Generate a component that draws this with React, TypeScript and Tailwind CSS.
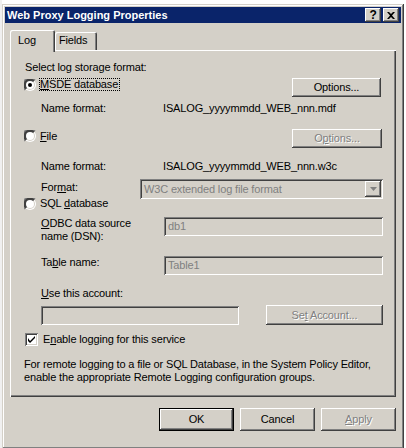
import React from 'react';

const font = "font-['Liberation_Sans',Arial,sans-serif] text-[11px] leading-[13px] tracking-[-0.15px] text-black";
const raised =
  'bg-[#d4d0c8] shadow-[inset_-1px_-1px_0_#404040,inset_1px_1px_0_#ffffff,inset_-2px_-2px_0_#808080,inset_2px_2px_0_#d4d0c8]';
const sunken =
  'bg-[#d4d0c8] shadow-[inset_1px_1px_0_#808080,inset_-1px_-1px_0_#ffffff,inset_2px_2px_0_#404040,inset_-2px_-2px_0_#d4d0c8]';
const grey = 'text-[#808080] [text-shadow:1px_1px_0_#ffffff]';

const Radio: React.FC<{ checked?: boolean }> = ({ checked }) => (
  <svg width="12" height="12" viewBox="0 0 12 12" className="shrink-0">
    <circle cx="6" cy="6" r="6" fill="#ffffff" />
    <path d="M0.5 11.5 A6 6 0 0 1 11.5 0.5 Z" fill="#808080" />
    <circle cx="6" cy="6" r="5" fill="#d4d0c8" />
    <path d="M1.5 10.5 A5 5 0 0 1 10.5 1.5 Z" fill="#404040" />
    <circle cx="6" cy="6" r="4" fill="#ffffff" />
    {checked && <circle cx="6" cy="6" r="2" fill="#000000" />}
  </svg>
);

const Checkbox: React.FC = () => (
  <div className="w-[13px] h-[13px] shrink-0 bg-white shadow-[inset_1px_1px_0_#808080,inset_-1px_-1px_0_#ffffff,inset_2px_2px_0_#404040,inset_-2px_-2px_0_#d4d0c8] flex items-center justify-center">
    <svg width="7" height="7" viewBox="0 0 7 7">
      <path d="M0 2 L0 5 L2 7 L7 2 L7 0 L2 5 Z" fill="#000000" />
    </svg>
  </div>
);

const Button: React.FC<{ w: string; h: string; disabled?: boolean; def?: boolean; children: React.ReactNode }> = ({
  w,
  h,
  disabled,
  def,
  children,
}) => (
  <div
    className={`${w} ${h} ${raised} ${def ? 'border border-black' : ''} flex items-center justify-center ${
      disabled ? grey : ''
    }`}
  >
    <span>{children}</span>
  </div>
);

const App: React.FC = () => {
  return (
    <div className={`w-[406px] h-[448px] overflow-hidden flex bg-white ${font}`}>
      <div className="w-[2px] h-full bg-[#f0f0f0]" />
      <div className="w-[402px] h-[445px] mt-[4px] p-[3px] flex flex-col bg-[#d4d0c8] shadow-[inset_-1px_-1px_0_#404040,inset_1px_1px_0_#d4d0c8,inset_-2px_-2px_0_#808080,inset_2px_2px_0_#ffffff]">
        {/* title bar */}
        <div className="h-[16px] bg-[#0a246a] flex items-center pl-[2px] pr-[2px]">
          <span className="text-white font-bold text-[11px] tracking-[0px]">Web Proxy Logging Properties</span>
          <div className={`ml-auto w-[16px] h-[14px] ${raised} flex items-center justify-center font-bold text-[12px] leading-[12px]`}>
            ?
          </div>
          <div className={`ml-[2px] w-[16px] h-[14px] ${raised} flex items-center justify-center`}>
            <svg width="8" height="7" viewBox="0 0 8 7">
              <path d="M0 0 L2 0 L4 2 L6 0 L8 0 L5 3.5 L8 7 L6 7 L4 5 L2 7 L0 7 L3 3.5 Z" fill="#000" />
            </svg>
          </div>
        </div>

        {/* tabs */}
        <div className="mt-[7px] ml-[5px] flex items-end h-[20px]">
          <div className="relative z-10 w-[45px] h-[22px] -mb-[2px] bg-[#d4d0c8] rounded-t-[2px] shadow-[inset_1px_1px_0_#ffffff,inset_-1px_0_0_#404040,inset_-2px_0_0_#808080] pl-[8px] pt-[4px]">
            Log
          </div>
          <div className="w-[42px] h-[18px] bg-[#d4d0c8] rounded-t-[2px] shadow-[inset_1px_1px_0_#ffffff,inset_-1px_0_0_#404040,inset_-2px_0_0_#808080] pl-[4px] pt-[2px]">
            Fields
          </div>
        </div>

        {/* tab page */}
        <div className="ml-[5px] w-[386px] h-[347px] pl-[14px] pt-[2px] flex flex-col shadow-[inset_1px_1px_0_#ffffff,inset_-1px_-1px_0_#404040,inset_-2px_-2px_0_#808080]">
          <div className="mt-[9px] ml-[1px] h-[13px]">Select log storage format:</div>

          <div className="mt-[4px] w-[359px] h-[19px] flex items-start">
            <div className="h-[13px] flex items-center">
              <Radio checked />
              <span className="ml-[3px] h-[13px] border border-dotted border-black leading-[11px] pr-[1px]">
                <u>M</u>SDE database
              </span>
            </div>
            <div className="ml-auto mr-[2px]">
              <Button w="w-[89px]" h="h-[19px]">
                Options...
              </Button>
            </div>
          </div>

          <div className="mt-[5px] h-[13px] flex pl-[17px]">
            <span className="w-[122px]">Name format:</span>
            <span>ISALOG_yyyymmdd_WEB_nnn.mdf</span>
          </div>

          <div className="mt-[14px] w-[359px] h-[19px] flex items-start">
            <div className="h-[14px] flex items-center">
              <Radio />
              <span className="ml-[4px]">
                <u>F</u>ile
              </span>
            </div>
            <div className="ml-auto mr-[1px]">
              <Button w="w-[90px]" h="h-[19px]" disabled>
                O<u>p</u>tions...
              </Button>
            </div>
          </div>

          <div className="mt-[12px] h-[13px] flex pl-[17px]">
            <span className="w-[122px]">Name format:</span>
            <span>ISALOG_yyyymmdd_WEB_nnn.w3c</span>
          </div>

          <div className="mt-[6px] h-[19px] flex items-start pl-[17px]">
            <span className="w-[99px] mt-[2px]">
              For<u>m</u>at:
            </span>
            <div className={`w-[243px] h-[20px] ${sunken} flex items-center pl-[4px] pr-[2px]`}>
              <span className="text-[#808080]">W3C extended log file format</span>
              <div className={`ml-auto w-[16px] h-[16px] ${raised} flex items-center justify-center`}>
                <svg width="7" height="4" viewBox="0 0 7 4">
                  <path d="M0 0 L7 0 L3.5 4 Z" fill="#808080" />
                </svg>
              </div>
            </div>
          </div>

          <div className="-mt-[1px] h-[13px] flex items-center">
            <Radio />
            <span className="ml-[4px]">
              SQL <u>d</u>atabase
            </span>
          </div>

          <div className="mt-[7px] h-[26px] flex items-start pl-[17px]">
            <span className="w-[123px]">
              <u>O</u>DBC data source
              <br />
              name (DSN):
            </span>
            <div className={`w-[219px] h-[19px] ${sunken} flex items-center pl-[4px] text-[#808080]`}>db1</div>
          </div>

          <div className="mt-[13px] h-[19px] flex items-start pl-[17px]">
            <span className="w-[123px]">
              Ta<u>b</u>le name:
            </span>
            <div className={`w-[219px] h-[19px] ${sunken} flex items-center pl-[4px] text-[#808080]`}>Table1</div>
          </div>

          <div className="mt-[12px] h-[13px] pl-[17px]">
            <u>U</u>se this account:
          </div>

          <div className="mt-[5px] w-[359px] h-[20px] flex items-start pl-[17px]">
            <div className={`mt-[1px] w-[198px] h-[19px] ${sunken}`} />
            <div className="ml-auto">
              <Button w="w-[117px]" h="h-[20px]" disabled>
                Se<u>t</u> Account...
              </Button>
            </div>
          </div>

          <div className="mt-[8px] h-[13px] flex items-center pl-[1px]">
            <Checkbox />
            <span className="ml-[5px]">
              E<u>n</u>able logging for this service
            </span>
          </div>

          <div className="mt-[12px]">
            For remote logging to a file or SQL Database, in the System Policy Editor,
            <br />
            enable the appropriate Remote Logging configuration groups.
          </div>
        </div>

        {/* dialog buttons */}
        <div className="mt-[11px] mr-[5px] flex justify-end gap-[6px]">
          <Button w="w-[75px]" h="h-[23px]" def>
            OK
          </Button>
          <Button w="w-[75px]" h="h-[23px]">
            Cancel
          </Button>
          <Button w="w-[75px]" h="h-[23px]" disabled>
            <u>A</u>pply
          </Button>
        </div>
      </div>
    </div>
  );
};

export default App;
